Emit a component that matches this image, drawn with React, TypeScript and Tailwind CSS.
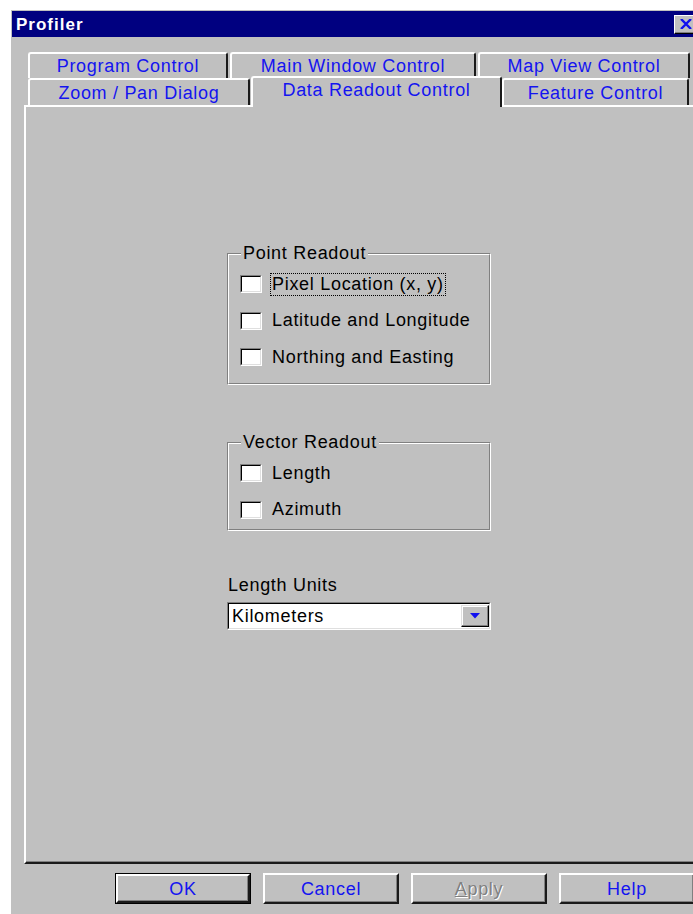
import { ReactNode } from "react";

const topTabs = [
  { label: "Program Control", width: "w-[200px]" },
  { label: "Main Window Control", width: "w-[246px]" },
  { label: "Map View Control", width: "w-[212px]" },
];

function Tab({ label, width }: { label: string; width: string }) {
  return (
    <div
      className={`${width} flex h-full items-center justify-center rounded-t-[3px] border-l-2 border-r-2 border-t-2 border-l-white border-r-[#1a1a1a] border-t-white text-[18px] leading-none tracking-[0.7px] text-[#1414f0]`}
    >
      {label}
    </div>
  );
}

function Checkbox({ label, focused }: { label: string; focused?: boolean }) {
  return (
    <div className="flex h-[24px] items-center">
      <div className="h-[18px] w-[22px] border-l border-t border-b border-r border-l-[#808080] border-t-[#808080] border-b-white border-r-white">
        <div className="h-full w-full border-l border-t border-b border-r border-l-black border-t-black border-b-[#dfdfdf] border-r-[#dfdfdf] bg-white" />
      </div>
      <span
        className={`ml-[8px] border px-[1px] text-[18px] leading-[21px] tracking-[0.7px] text-black ${
          focused ? "border-dotted border-black" : "border-transparent"
        }`}
      >
        {label}
      </span>
    </div>
  );
}

function GroupBox({ title, height, children }: { title: string; height: string; children: ReactNode }) {
  return (
    <div className={`relative w-[264px] ${height} border-l border-t border-b border-r border-l-[#808080] border-t-[#808080] border-b-white border-r-white`}>
      <div className="h-full w-full border-l border-t border-b border-r border-l-white border-t-white border-b-[#808080] border-r-[#808080]">
        <div className="flex flex-col gap-[12.5px] pl-[11px] pt-[17px]">{children}</div>
      </div>
      <span className="absolute -top-[11px] left-[13px] bg-[#c0c0c0] px-[2px] text-[18px] leading-[20px] tracking-[0.7px] text-black">
        {title}
      </span>
    </div>
  );
}

function DialogButton({ children, isDefault }: { children: ReactNode; isDefault?: boolean }) {
  const face = (
    <div className="flex h-full w-full items-center justify-center border-b-2 border-l-2 border-r-2 border-t-2 border-b-[#1a1a1a] border-l-white border-r-[#1a1a1a] border-t-white shadow-[inset_-1px_-1px_0_#808080] text-[18px] leading-none tracking-[0.7px]">
      {children}
    </div>
  );
  return isDefault ? (
    <div className="h-[31px] w-[136px] border border-black">{face}</div>
  ) : (
    <div className="h-[31px] w-[136px]">{face}</div>
  );
}

export default function App() {
  return (
    <div className="h-[914px] w-[693px] overflow-hidden bg-white font-['Liberation_Sans',Arial,sans-serif]">
      <div className="ml-[11px] mt-[10px] flex h-[904px] w-[693px] flex-col border-l border-t border-[#c0c0c0]">
        {/* caption */}
        <div className="flex h-[26px] items-center bg-[#000080] pl-[4px]">
          <span className="text-[17px] font-bold leading-none tracking-[1px] text-white">Profiler</span>
          <div className="ml-auto mr-[6px] flex h-[19px] w-[24px] items-center justify-center border-b border-l border-r border-t border-b-black border-l-white border-r-black border-t-white bg-[#c0c0c0] shadow-[inset_-1px_-1px_0_#808080]">
            <svg width="12" height="10" viewBox="0 0 12 10">
              <path d="M1 0 L11 10 M11 0 L1 10" stroke="#1010f0" strokeWidth="2.4" />
            </svg>
          </div>
        </div>

        {/* body */}
        <div className="flex flex-1 flex-col bg-[#c0c0c0] pt-[15px]">
          <div className="ml-[16px] flex h-[26px] gap-[2px]">
            {topTabs.map((t) => (
              <Tab key={t.label} label={t.label} width={t.width} />
            ))}
          </div>
          <div className="ml-[16px] flex h-[27px]">
            <Tab label="Zoom / Pan Dialog" width="w-[222px]" />
            <div className="relative z-10 -mt-[2px] ml-[1px] flex h-[31px] w-[251px] shrink-0 items-center justify-center rounded-t-[3px] border-l-2 border-r-2 border-t-2 border-l-white border-r-[#1a1a1a] border-t-white bg-[#c0c0c0] pb-[5px] text-[18px] leading-none tracking-[0.7px] text-[#1414f0]">
              Data Readout Control
            </div>
            <Tab label="Feature Control" width="w-[187px]" />
          </div>

          {/* tab page */}
          <div className="ml-[12px] h-[759px] w-[720px] border-b-2 border-l-2 border-t-2 border-b-[#1a1a1a] border-l-white border-t-white shadow-[inset_0_-1px_0_#808080]">
            <div className="ml-[201px] mt-[146px] flex flex-col">
              <GroupBox title="Point Readout" height="h-[132px]">
                <Checkbox label="Pixel Location (x, y)" focused />
                <Checkbox label="Latitude and Longitude" />
                <Checkbox label="Northing and Easting" />
              </GroupBox>

              <div className="mt-[57px]">
                <GroupBox title="Vector Readout" height="h-[89px]">
                  <Checkbox label="Length" />
                  <Checkbox label="Azimuth" />
                </GroupBox>
              </div>

              <span className="ml-[1px] mt-[44px] text-[18px] leading-[20px] tracking-[0.7px] text-black">Length Units</span>

              <div className="mt-[7px] h-[28px] w-[264px] border-b border-l border-r border-t border-b-white border-l-[#808080] border-r-white border-t-[#808080]">
                <div className="flex h-full w-full items-center border-b border-l border-r border-t border-b-[#dfdfdf] border-l-black border-r-[#dfdfdf] border-t-black bg-white pl-[3px]">
                  <span className="text-[18px] leading-none tracking-[0.7px] text-black">Kilometers</span>
                  <div className="ml-auto flex h-[22px] w-[28px] items-center justify-center border-b border-l border-r border-t border-b-black border-l-[#dfdfdf] border-r-black border-t-[#dfdfdf] bg-[#c0c0c0] shadow-[inset_-1px_-1px_0_#808080,inset_1px_1px_0_#fff]">
                    <svg width="10" height="6" viewBox="0 0 10 6">
                      <path d="M0 0 H10 L5 5.5 Z" fill="#1010f0" />
                    </svg>
                  </div>
                </div>
              </div>
            </div>
          </div>

          {/* buttons */}
          <div className="ml-[103px] mt-[9px] flex gap-[12px]">
            <DialogButton isDefault>
              <span className="text-[#1414f0]">OK</span>
            </DialogButton>
            <DialogButton>
              <span className="text-[#1414f0]">Cancel</span>
            </DialogButton>
            <DialogButton>
              <span className="text-[#808080] [text-shadow:1px_1px_0_#fff]">
                <span className="underline">A</span>pply
              </span>
            </DialogButton>
            <DialogButton>
              <span className="text-[#1414f0]">Help</span>
            </DialogButton>
          </div>
        </div>
      </div>
    </div>
  );
}
